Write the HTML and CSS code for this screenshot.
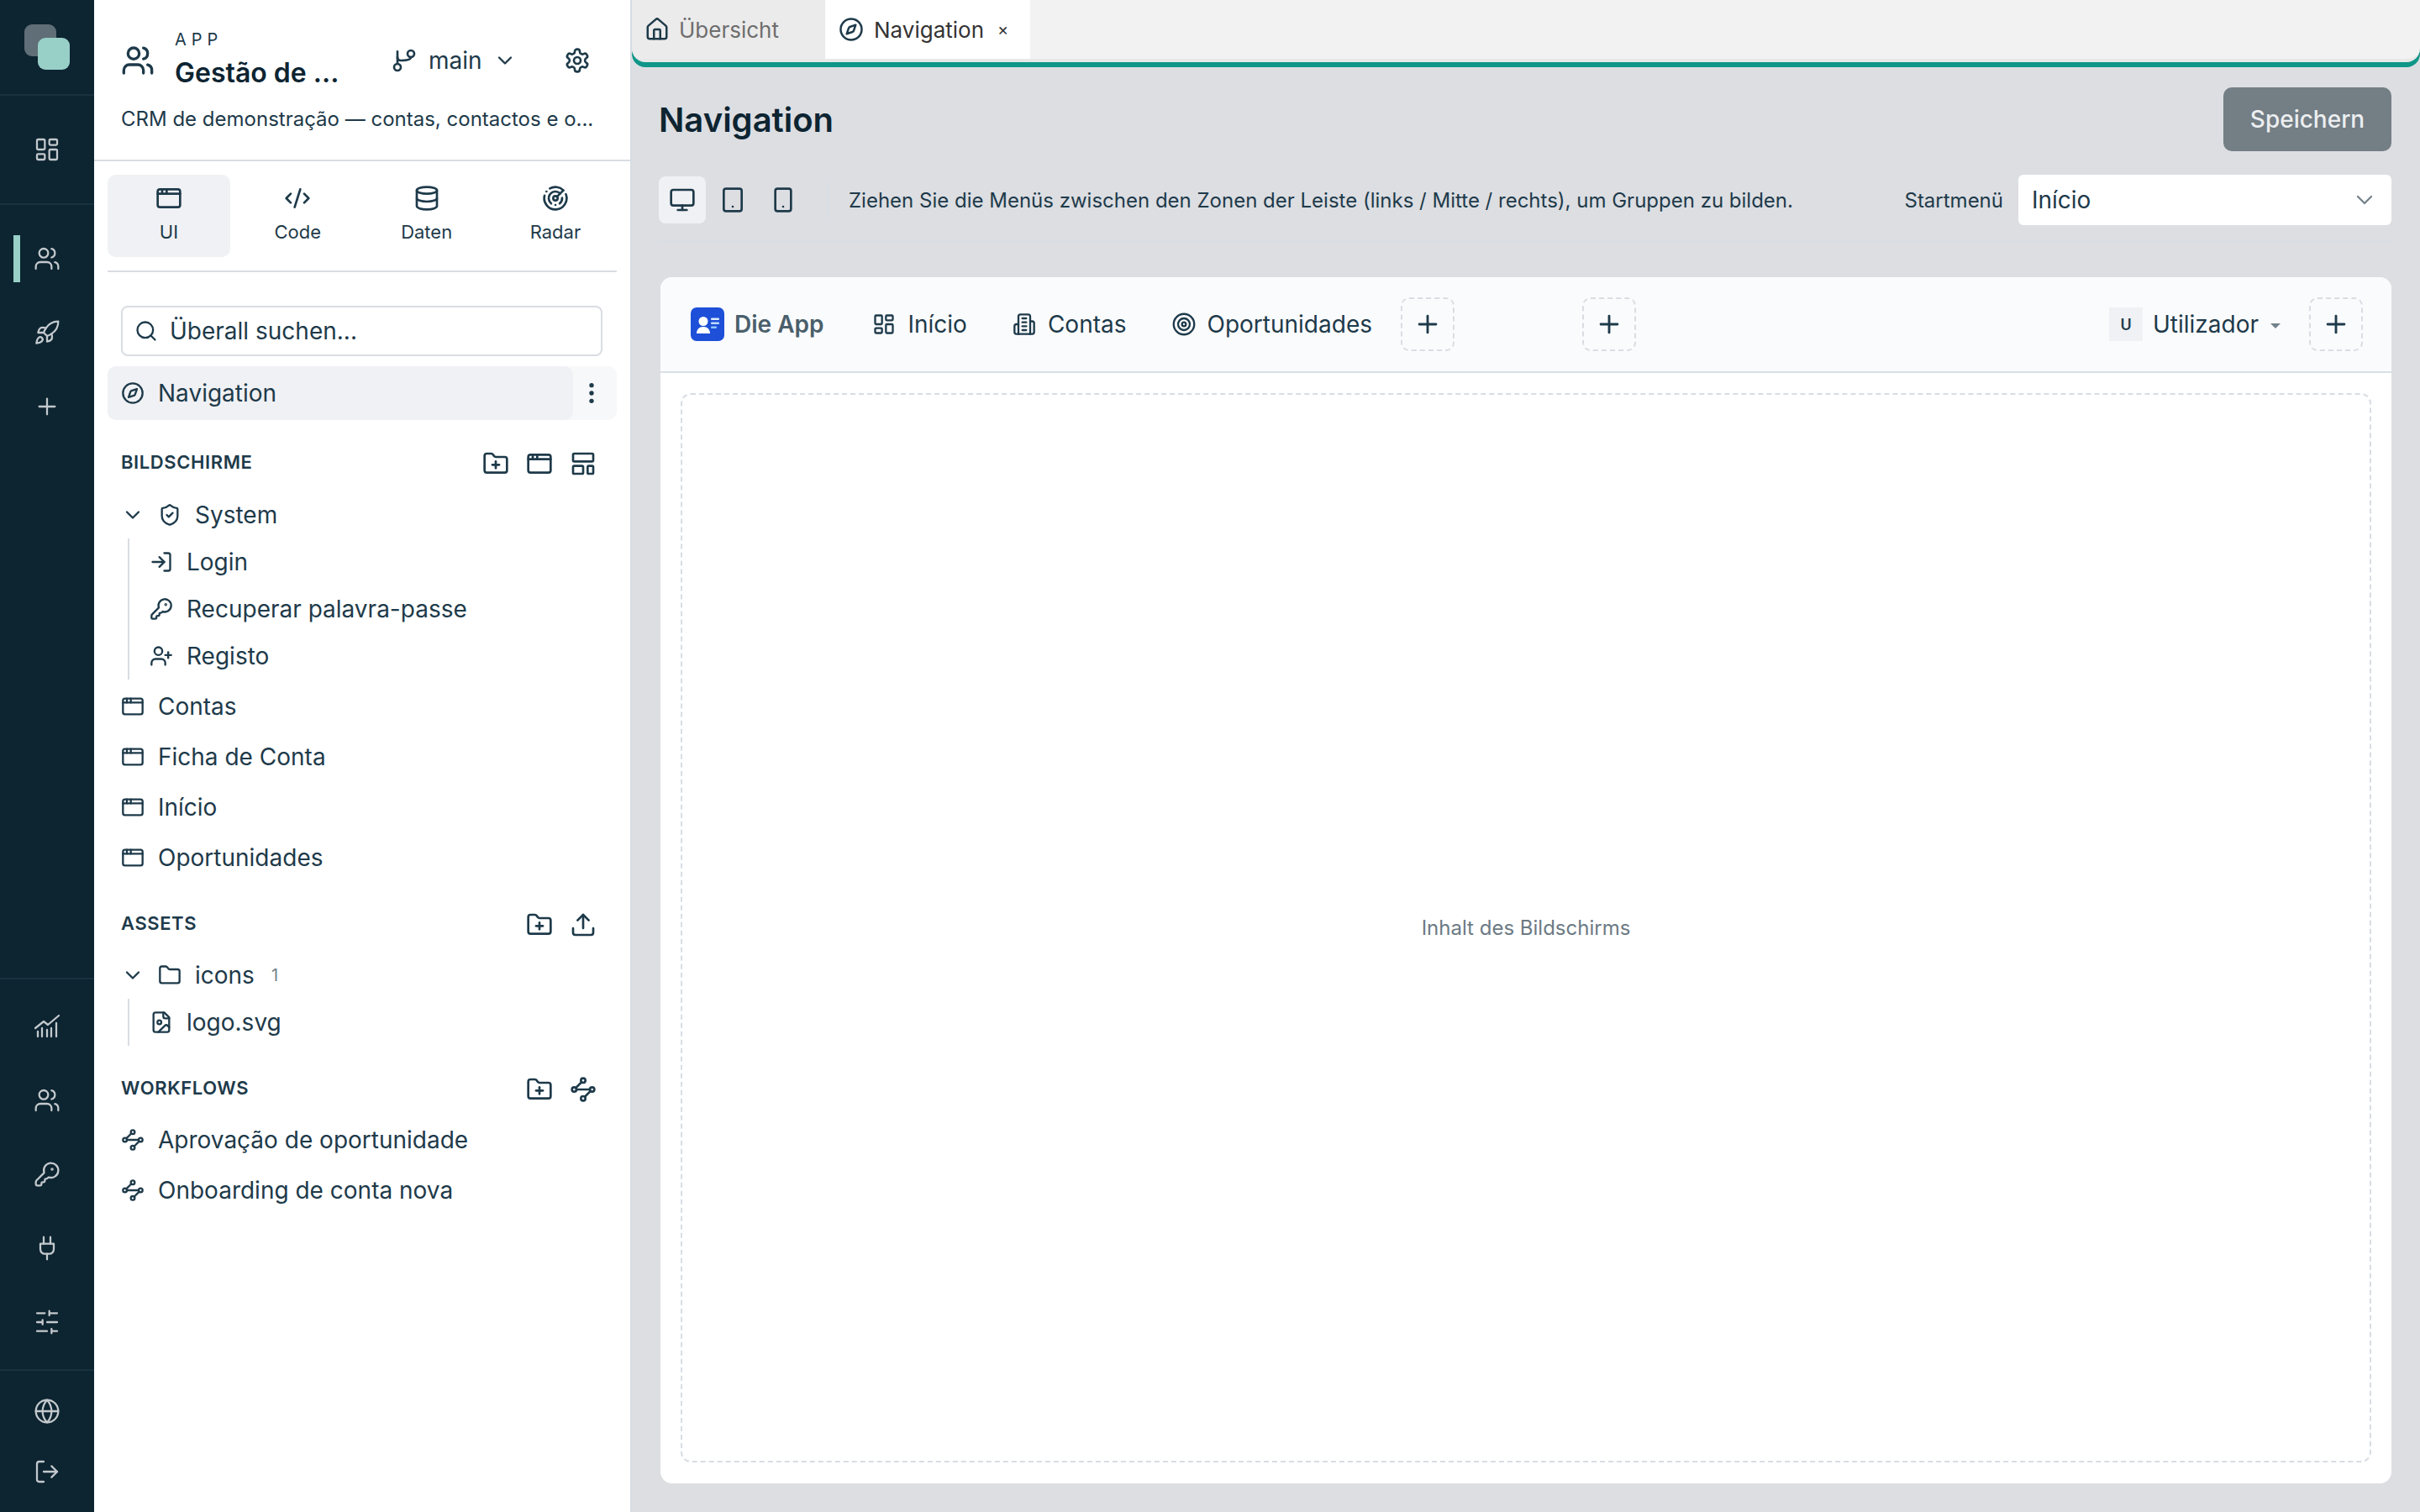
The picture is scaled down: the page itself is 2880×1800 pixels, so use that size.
FILE: index.html
```html
<!DOCTYPE html>
<html lang="de">
<head>
<meta charset="utf-8">
<title>Navigation</title>
<link rel="stylesheet" href="styles.css">
</head>
<body>
<svg class="defs" aria-hidden="true">
<symbol id="i-grid" viewBox="0 0 24 24"><rect x="3" y="3" width="7" height="9" rx="1"/><rect x="14" y="3" width="7" height="5" rx="1"/><rect x="14" y="12" width="7" height="9" rx="1"/><rect x="3" y="16" width="7" height="5" rx="1"/></symbol>
<symbol id="i-users" viewBox="0 0 24 24"><path d="M16 21v-2a4 4 0 0 0-4-4H6a4 4 0 0 0-4 4v2"/><circle cx="9" cy="7" r="4"/><path d="M22 21v-2a4 4 0 0 0-3-3.87"/><path d="M16 3.13a4 4 0 0 1 0 7.75"/></symbol>
<symbol id="i-rocket" viewBox="0 0 24 24"><path d="M4.5 16.5c-1.5 1.26-2 5-2 5s3.74-.5 5-2c.71-.84.7-2.13-.09-2.91a2.18 2.18 0 0 0-2.91-.09z"/><path d="m12 15-3-3a22 22 0 0 1 2-3.95A12.88 12.88 0 0 1 22 2c0 2.72-.78 7.5-6 11a22.35 22.35 0 0 1-4 2z"/><path d="M9 12H4s.55-3.03 2-4c1.62-1.08 5 0 5 0"/><path d="M12 15v5s3.03-.55 4-2c1.08-1.62 0-5 0-5"/></symbol>
<symbol id="i-plus" viewBox="0 0 24 24"><path d="M5 12h14"/><path d="M12 5v14"/></symbol>
<symbol id="i-chart" viewBox="0 0 24 24"><path d="M3.75 21v-4.5"/><path d="M7.5 21v-7.5"/><path d="M12 21v-6"/><path d="M15.75 21v-7.5"/><path d="M20.25 21V9"/><path d="M1.5 13.5 9 7.5l3.75 3 9.75-8.25"/></symbol>
<symbol id="i-key" viewBox="0 0 24 24"><path d="M2.586 17.414A2 2 0 0 0 2 18.828V21a1 1 0 0 0 1 1h3a1 1 0 0 0 1-1v-1a1 1 0 0 1 1-1h1a1 1 0 0 0 1-1v-1a1 1 0 0 1 1-1h.172a2 2 0 0 0 1.414-.586l.814-.814a6.5 6.5 0 1 0-4-4z"/><circle cx="16.5" cy="7.5" r=".5"/></symbol>
<symbol id="i-plug" viewBox="0 0 24 24"><path d="M12 22v-5"/><path d="M9 8V2"/><path d="M15 8V2"/><path d="M18 8v5a4 4 0 0 1-4 4h-4a4 4 0 0 1-4-4V8Z"/></symbol>
<symbol id="i-sliders" viewBox="0 0 24 24"><path d="M21 4h-7M10 4H3M21 12h-9M8 12H3M21 20h-5M12 20H3M14 2v4M8 10v4M16 18v4"/></symbol>
<symbol id="i-globe" viewBox="0 0 24 24"><circle cx="12" cy="12" r="10"/><path d="M12 2a14.5 14.5 0 0 0 0 20 14.5 14.5 0 0 0 0-20"/><path d="M2 12h20"/></symbol>
<symbol id="i-logout" viewBox="0 0 24 24"><path d="M9 21H5a2 2 0 0 1-2-2V5a2 2 0 0 1 2-2h4"/><path d="m16 17 5-5-5-5"/><path d="M21 12H9"/></symbol>
<symbol id="i-branch" viewBox="0 0 24 24"><circle cx="18" cy="6" r="3"/><circle cx="6" cy="18" r="3"/><path d="M6 15V9"/><path d="M6 4v5c0 2 1 3 3 3 5 0 9-1 9-3"/></symbol>
<symbol id="i-chev" viewBox="0 0 24 24"><path d="m6 9 6 6 6-6"/></symbol>
<symbol id="i-gear" viewBox="0 0 24 24"><path d="M12.22 2h-.44a2 2 0 0 0-2 2v.18a2 2 0 0 1-1 1.73l-.43.25a2 2 0 0 1-2 0l-.15-.08a2 2 0 0 0-2.73.73l-.22.38a2 2 0 0 0 .73 2.73l.15.1a2 2 0 0 1 1 1.72v.51a2 2 0 0 1-1 1.74l-.15.09a2 2 0 0 0-.73 2.73l.22.38a2 2 0 0 0 2.73.73l.15-.08a2 2 0 0 1 2 0l.43.25a2 2 0 0 1 1 1.73V20a2 2 0 0 0 2 2h.44a2 2 0 0 0 2-2v-.18a2 2 0 0 1 1-1.73l.43-.25a2 2 0 0 1 2 0l.15.08a2 2 0 0 0 2.73-.73l.22-.39a2 2 0 0 0-.73-2.73l-.15-.08a2 2 0 0 1-1-1.74v-.5a2 2 0 0 1 1-1.74l.15-.09a2 2 0 0 0 .73-2.73l-.22-.38a2 2 0 0 0-2.73-.73l-.15.08a2 2 0 0 1-2 0l-.43-.25a2 2 0 0 1-1-1.73V4a2 2 0 0 0-2-2z"/><circle cx="12" cy="12" r="3"/></symbol>
<symbol id="i-window" viewBox="0 0 24 24"><rect x="2" y="4" width="20" height="16" rx="2"/><path d="M10 4v4"/><path d="M2 8h20"/><path d="M6 4v4"/></symbol>
<symbol id="i-code" viewBox="0 0 24 24"><path d="m18 16 4-4-4-4"/><path d="m6 8-4 4 4 4"/><path d="m14.5 4-5 16"/></symbol>
<symbol id="i-db" viewBox="0 0 24 24"><ellipse cx="12" cy="5" rx="9" ry="3"/><path d="M3 5v14a9 3 0 0 0 18 0V5"/><path d="M3 12a9 3 0 0 0 18 0"/></symbol>
<symbol id="i-radar" viewBox="0 0 24 24"><path d="M19.07 4.93A10 10 0 0 0 6.99 3.34"/><path d="M4 6h.01"/><path d="M2.29 9.62A10 10 0 1 0 21.31 8.35"/><path d="M16.24 7.76A6 6 0 1 0 8.23 16.67"/><path d="M12 18h.01"/><path d="M17.99 11.66A6 6 0 0 1 15.77 16.67"/><circle cx="12" cy="12" r="2"/><path d="m13.41 10.59 5.66-5.66"/></symbol>
<symbol id="i-search" viewBox="0 0 24 24"><path d="m21 21-4.3-4.3"/><circle cx="11" cy="11" r="8"/></symbol>
<symbol id="i-compass" viewBox="0 0 24 24"><path d="m16.24 7.76-1.804 5.411a2 2 0 0 1-1.265 1.265L7.76 16.24l1.804-5.411a2 2 0 0 1 1.265-1.265z"/><circle cx="12" cy="12" r="10"/></symbol>
<symbol id="i-folderplus" viewBox="0 0 24 24"><path d="M12 10v6"/><path d="M9 13h6"/><path d="M20 20a2 2 0 0 0 2-2V8a2 2 0 0 0-2-2h-7.9a2 2 0 0 1-1.69-.9L9.6 3.9A2 2 0 0 0 7.93 3H4a2 2 0 0 0-2 2v13a2 2 0 0 0 2 2Z"/></symbol>
<symbol id="i-template" viewBox="0 0 24 24"><rect x="3" y="3" width="18" height="7" rx="1"/><rect x="3" y="14" width="9" height="7" rx="1"/><rect x="16" y="14" width="5" height="7" rx="1"/></symbol>
<symbol id="i-shield" viewBox="0 0 24 24"><path d="M20 13c0 5-3.5 7.5-7.66 8.95a1 1 0 0 1-.67-.01C7.5 20.5 4 18 4 13V6a1 1 0 0 1 1-1c2 0 4.5-1.2 6.24-2.72a1.17 1.17 0 0 1 1.52 0C14.51 3.81 17 5 19 5a1 1 0 0 1 1 1z"/><path d="m9 12 2 2 4-4"/></symbol>
<symbol id="i-login" viewBox="0 0 24 24"><path d="m10 17 5-5-5-5"/><path d="M15 12H3"/><path d="M15 3h4a2 2 0 0 1 2 2v14a2 2 0 0 1-2 2h-4"/></symbol>
<symbol id="i-userplus" viewBox="0 0 24 24"><path d="M16 21v-2a4 4 0 0 0-4-4H6a4 4 0 0 0-4 4v2"/><circle cx="9" cy="7" r="4"/><path d="M19 8v6"/><path d="M22 11h-6"/></symbol>
<symbol id="i-upload" viewBox="0 0 24 24"><path d="M21 15v4a2 2 0 0 1-2 2H5a2 2 0 0 1-2-2v-4"/><path d="m17 8-5-5-5 5"/><path d="M12 3v12"/></symbol>
<symbol id="i-folder" viewBox="0 0 24 24"><path d="M20 20a2 2 0 0 0 2-2V8a2 2 0 0 0-2-2h-7.9a2 2 0 0 1-1.69-.9L9.6 3.9A2 2 0 0 0 7.93 3H4a2 2 0 0 0-2 2v13a2 2 0 0 0 2 2Z"/></symbol>
<symbol id="i-fileimg" viewBox="0 0 24 24"><path d="M15 2H6a2 2 0 0 0-2 2v16a2 2 0 0 0 2 2h12a2 2 0 0 0 2-2V7Z"/><path d="M14 2v4a2 2 0 0 0 2 2h4"/><circle cx="10" cy="12" r="2"/><path d="m20 17-1.296-1.296a2.41 2.41 0 0 0-3.408 0L9 22"/></symbol>
<symbol id="i-flow" viewBox="0 0 24 24"><circle cx="12" cy="4" r="2"/><circle cx="4" cy="12" r="2"/><circle cx="20" cy="12" r="2"/><circle cx="12" cy="20" r="2"/><path d="M10.6 5.4 5.4 10.6"/><path d="M6 12h12"/><path d="M18.6 13.4 13.4 18.6"/></symbol>
<symbol id="i-home" viewBox="0 0 24 24"><path d="M15 21v-8a1 1 0 0 0-1-1h-4a1 1 0 0 0-1 1v8"/><path d="M3 10a2 2 0 0 1 .709-1.528l7-5.999a2 2 0 0 1 2.582 0l7 5.999A2 2 0 0 1 21 10v9a2 2 0 0 1-2 2H5a2 2 0 0 1-2-2z"/></symbol>
<symbol id="i-monitor" viewBox="0 0 24 24"><rect x="2" y="3" width="20" height="14" rx="2"/><path d="M8 21h8"/><path d="M12 17v4"/></symbol>
<symbol id="i-tablet" viewBox="0 0 24 24"><rect x="4" y="2" width="16" height="20" rx="2"/><path d="M12 18h.01"/></symbol>
<symbol id="i-phone" viewBox="0 0 24 24"><rect x="5" y="2" width="14" height="20" rx="2"/><path d="M12 18h.01"/></symbol>
<symbol id="i-building" viewBox="0 0 24 24"><path d="M6 22V4a2 2 0 0 1 2-2h8a2 2 0 0 1 2 2v18Z"/><path d="M6 12H4a2 2 0 0 0-2 2v6a2 2 0 0 0 2 2h2"/><path d="M18 9h2a2 2 0 0 1 2 2v9a2 2 0 0 1-2 2h-2"/><path d="M10 6h4"/><path d="M10 10h4"/><path d="M10 14h4"/><path d="M10 18h4"/></symbol>
<symbol id="i-target" viewBox="0 0 24 24"><circle cx="12" cy="12" r="10.5"/><circle cx="12" cy="12" r="6"/><circle cx="12" cy="12" r="2"/></symbol>
</svg>

<div class="app">
  <nav class="rail">
    <div class="rail-logo"><span class="logo-back"></span><span class="logo-front"></span></div>
    <div class="rail-group rail-single"><svg class="ic ic-rail"><use href="#i-grid"/></svg></div>
    <div class="rail-group rail-main">
      <a class="rail-item active"><svg class="ic ic-rail"><use href="#i-users"/></svg></a>
      <a class="rail-item"><svg class="ic ic-rail"><use href="#i-rocket"/></svg></a>
      <a class="rail-item"><svg class="ic ic-rail"><use href="#i-plus"/></svg></a>
    </div>
    <div class="rail-group rail-tools">
      <a class="rail-item"><svg class="ic ic-rail"><use href="#i-chart"/></svg></a>
      <a class="rail-item"><svg class="ic ic-rail"><use href="#i-users"/></svg></a>
      <a class="rail-item"><svg class="ic ic-rail"><use href="#i-key"/></svg></a>
      <a class="rail-item"><svg class="ic ic-rail"><use href="#i-plug"/></svg></a>
      <a class="rail-item"><svg class="ic ic-rail"><use href="#i-sliders"/></svg></a>
    </div>
    <div class="rail-group rail-bottom">
      <a class="rail-item rail-item-b"><svg class="ic ic-rail"><use href="#i-globe"/></svg></a>
      <a class="rail-item rail-item-b"><svg class="ic ic-rail"><use href="#i-logout"/></svg></a>
    </div>
  </nav>

  <aside class="panel">
    <header class="panel-head">
      <div class="head-row">
        <svg class="ic ic-app"><use href="#i-users"/></svg>
        <div class="app-names">
          <div class="app-kicker">APP</div>
          <div class="app-title">Gestão de ...</div>
        </div>
        <div class="branch"><svg class="ic ic-md"><use href="#i-branch"/></svg><span>main</span><svg class="ic ic-chev"><use href="#i-chev"/></svg></div>
        <svg class="ic ic-gear"><use href="#i-gear"/></svg>
      </div>
      <p class="app-desc">CRM de demonstração — contas, contactos e o...</p>
    </header>

    <div class="mode-tabs">
      <div class="mode active"><svg class="ic ic-mode"><use href="#i-window"/></svg><span>UI</span></div>
      <div class="mode"><svg class="ic ic-mode"><use href="#i-code"/></svg><span>Code</span></div>
      <div class="mode"><svg class="ic ic-mode"><use href="#i-db"/></svg><span>Daten</span></div>
      <div class="mode"><svg class="ic ic-mode"><use href="#i-radar"/></svg><span>Radar</span></div>
    </div>

    <div class="search"><svg class="ic ic-search"><use href="#i-search"/></svg><span>Überall suchen...</span></div>

    <div class="nav-sel">
      <div class="nav-sel-main"><svg class="ic ic-row"><use href="#i-compass"/></svg><span>Navigation</span></div>
      <div class="nav-sel-more"><svg class="ic ic-more" viewBox="0 0 24 24"><circle cx="12" cy="5" r="2" class="dot"/><circle cx="12" cy="12" r="2" class="dot"/><circle cx="12" cy="19" r="2" class="dot"/></svg></div>
    </div>

    <section class="sec sec-screens">
      <div class="sec-head"><h3>BILDSCHIRME</h3><div class="sec-acts"><svg class="ic ic-act"><use href="#i-folderplus"/></svg><svg class="ic ic-act"><use href="#i-window"/></svg><svg class="ic ic-act"><use href="#i-template"/></svg></div></div>
      <div class="row row-folder"><svg class="ic ic-chev2"><use href="#i-chev"/></svg><svg class="ic ic-row"><use href="#i-shield"/></svg><span>System</span></div>
      <div class="subtree">
        <div class="row row-sub"><svg class="ic ic-row"><use href="#i-login"/></svg><span>Login</span></div>
        <div class="row row-sub"><svg class="ic ic-row"><use href="#i-key"/></svg><span>Recuperar palavra-passe</span></div>
        <div class="row row-sub"><svg class="ic ic-row"><use href="#i-userplus"/></svg><span>Registo</span></div>
      </div>
      <div class="row row-top"><svg class="ic ic-row"><use href="#i-window"/></svg><span>Contas</span></div>
      <div class="row row-top"><svg class="ic ic-row"><use href="#i-window"/></svg><span>Ficha de Conta</span></div>
      <div class="row row-top"><svg class="ic ic-row"><use href="#i-window"/></svg><span>Início</span></div>
      <div class="row row-top"><svg class="ic ic-row"><use href="#i-window"/></svg><span>Oportunidades</span></div>
    </section>

    <section class="sec sec-assets">
      <div class="sec-head"><h3>ASSETS</h3><div class="sec-acts"><svg class="ic ic-act"><use href="#i-folderplus"/></svg><svg class="ic ic-act"><use href="#i-upload"/></svg></div></div>
      <div class="row row-folder"><svg class="ic ic-chev2"><use href="#i-chev"/></svg><svg class="ic ic-row"><use href="#i-folder"/></svg><span>icons</span><small class="count">1</small></div>
      <div class="subtree">
        <div class="row row-sub"><svg class="ic ic-row"><use href="#i-fileimg"/></svg><span>logo.svg</span></div>
      </div>
    </section>

    <section class="sec sec-flows">
      <div class="sec-head"><h3>WORKFLOWS</h3><div class="sec-acts"><svg class="ic ic-act"><use href="#i-folderplus"/></svg><svg class="ic ic-act"><use href="#i-flow"/></svg></div></div>
      <div class="row row-top"><svg class="ic ic-row"><use href="#i-flow"/></svg><span>Aprovação de oportunidade</span></div>
      <div class="row row-top"><svg class="ic ic-row"><use href="#i-flow"/></svg><span>Onboarding de conta nova</span></div>
    </section>
  </aside>

  <main class="main">
    <div class="tabs-wrap">
      <div class="tabs">
        <div class="tab"><svg class="ic ic-tab"><use href="#i-home"/></svg><span>Übersicht</span></div>
        <div class="tab tab-active"><svg class="ic ic-tab"><use href="#i-compass"/></svg><span>Navigation</span><span class="tab-x">×</span></div>
      </div>
    </div>

    <div class="page">
      <div class="page-head">
        <h1>Navigation</h1>
        <button class="save">Speichern</button>
      </div>
      <div class="toolbar">
        <div class="devices">
          <span class="device active"><svg class="ic ic-device"><use href="#i-monitor"/></svg></span>
          <span class="device"><svg class="ic ic-device"><use href="#i-tablet"/></svg></span>
          <span class="device"><svg class="ic ic-device"><use href="#i-phone"/></svg></span>
        </div>
        <span class="tool-sep"></span>
        <p class="hint">Ziehen Sie die Menüs zwischen den Zonen der Leiste (links / Mitte / rechts), um Gruppen zu bilden.</p>
        <label class="start-label">Startmenü</label>
        <div class="select"><span>Início</span><svg class="ic ic-selchev"><use href="#i-chev"/></svg></div>
      </div>

      <div class="card">
        <div class="bar">
          <div class="zone zone-left">
            <div class="brand"><svg class="brand-logo" viewBox="0 0 40 40"><rect width="40" height="40" rx="7" class="brand-bg"/><circle cx="15" cy="16.500" r="5.500" class="brand-w"/><path d="M7 31c0-4.500 3-8 8-8s8 3.500 8 8z" class="brand-w"/><rect x="24" y="12.500" width="10" height="2.600" rx="1" class="brand-l1"/><rect x="24" y="17.500" width="10" height="2.600" rx="1" class="brand-l2"/><rect x="24" y="22.500" width="7" height="2.600" rx="1" class="brand-l3"/></svg><span>Die App</span></div>
            <div class="menu"><svg class="ic ic-menu"><use href="#i-grid"/></svg><span>Início</span></div>
            <div class="menu"><svg class="ic ic-menu"><use href="#i-building"/></svg><span>Contas</span></div>
            <div class="menu menu-last"><svg class="ic ic-menu"><use href="#i-target"/></svg><span>Oportunidades</span></div>
            <div class="add"><svg class="ic ic-add"><use href="#i-plus"/></svg></div>
          </div>
          <div class="zone zone-mid"><div class="add"><svg class="ic ic-add"><use href="#i-plus"/></svg></div></div>
          <div class="zone zone-right">
            <div class="user"><span class="avatar">U</span><span>Utilizador</span><span class="caret"></span></div>
            <div class="add"><svg class="ic ic-add"><use href="#i-plus"/></svg></div>
          </div>
        </div>
        <div class="canvas-wrap"><div class="canvas">Inhalt des Bildschirms</div></div>
      </div>
    </div>
  </main>
</div>
</body>
</html>
```
FILE: styles.css
```css
* { box-sizing: border-box; }
html, body { margin: 0; height: 100%; }
body { font-family: Inter, "Noto Sans", sans-serif; color: #1e3a4a; background: #dcdee2; overflow: hidden; }
.defs { display: none; }
h1, h3, p { margin: 0; }
.ic { fill: none; stroke: currentColor; stroke-width: 2; stroke-linecap: round; stroke-linejoin: round; flex: none; display: block; }

.app { display: flex; width: 2880px; height: 1800px; }

/* rail */
.rail { width: 112px; flex: none; background: #0d2431; display: flex; flex-direction: column; color: #c3c9cd; }
.rail-logo { height: 114px; position: relative; border-bottom: 2px solid #17323f; flex: none; }
.logo-back, .logo-front { position: absolute; width: 38px; height: 38px; border-radius: 9px; }
.logo-back { left: 29px; top: 29px; background: #5f6e77; }
.logo-front { left: 45px; top: 45px; background: #98d0c8; }
.rail-group { display: flex; flex-direction: column; align-items: center; flex: none; }
.rail-single { height: 130px; justify-content: center; border-bottom: 2px solid #17323f; }
.rail-main { flex: 1; padding-top: 20px; border-bottom: 2px solid #17323f; }
.rail-tools { padding: 12px 0; height: 466px; border-bottom: 2px solid #17323f; }
.rail-bottom { height: 168px; padding-top: 12px; }
.rail-item { width: 112px; height: 88px; flex: none; display: flex; align-items: center; justify-content: center; position: relative; }
.rail-item-b { height: 72px; }
.rail-item.active::before { content: ""; position: absolute; left: 16px; top: 16px; width: 8px; height: 56px; background: #98d0c8; }
.ic-rail { width: 32px; height: 32px; stroke-width: 1.7; }

/* panel */
.panel { width: 638px; flex: none; background: #fff; display: flex; flex-direction: column; }
.panel-head { height: 192px; padding: 32px 32px 0; border-bottom: 2px solid #d9dde2; flex: none; }
.head-row { display: flex; align-items: center; height: 76px; }
.ic-app { width: 40px; height: 40px; margin-top: 4px; }
.app-names { margin: 2px 0 0 24px; width: 226px; flex: none; }
.app-kicker { font-size: 20px; line-height: 24px; letter-spacing: 6px; }
.app-title { font-size: 32px; line-height: 40px; font-weight: 600; color: #0d2431; margin-top: 8px; white-space: nowrap; }
.branch { display: flex; align-items: center; font-size: 28px; color: #1e3a4a; margin-left: 31px; margin-top: 4px; }
.ic-md { width: 32px; height: 32px; margin-right: 13px; }
.ic-chev { width: 28px; height: 28px; margin-left: 13px; }
.ic-gear { width: 32px; height: 32px; margin-left: 56px; margin-top: 4px; }
.app-desc { font-size: 24px; line-height: 34px; margin-top: 17px; white-space: nowrap; color: #1e3a4a; }

.mode-tabs { display: flex; justify-content: space-between; margin: 16px 16px 0; padding-bottom: 16px; border-bottom: 2px solid #d9dde2; flex: none; }
.mode { width: 146px; height: 98px; border-radius: 10px; display: flex; flex-direction: column; align-items: center; padding-top: 12px; gap: 12px; font-size: 22px; line-height: 24px; }
.mode.active { background: #f0f1f4; }
.ic-mode { width: 32px; height: 32px; }

.search { margin: 40px 33px 0 32px; height: 60px; border: 2px solid #d9dde2; border-radius: 8px; display: flex; align-items: center; padding-left: 14px; font-size: 28px; flex: none; }
.ic-search { width: 28px; height: 28px; margin-right: 14px; }

.nav-sel { margin: 12px 16px 0; height: 64px; background: #f7f8fa; border-radius: 10px; display: flex; flex: none; }
.nav-sel-main { width: 554px; background: #f0f1f4; border-radius: 10px; display: flex; align-items: center; padding-left: 16px; font-size: 28px; gap: 16px; }
.nav-sel-more { flex: 1; display: flex; align-items: center; justify-content: center; padding-right: 8px; }
.ic-more { width: 32px; height: 32px; }
.ic-more .dot { fill: #1e3a4a; stroke: none; }
.ic-row { width: 28px; height: 28px; }

.sec { padding: 0 32px; flex: none; }
.sec-screens { margin-top: 28px; }
.sec-assets { margin-top: 26px; }
.sec-flows { margin-top: 28px; }
.sec-head { display: flex; align-items: center; justify-content: space-between; height: 44px; margin-bottom: 12px; }
.sec-screens .sec-head { margin-bottom: 13px; }
.sec-flows .sec-head { margin-bottom: 10px; }
.sec-head h3 { font-size: 22px; font-weight: 600; letter-spacing: .6px; color: #1e3a4a; }
.sec-acts { display: flex; gap: 20px; padding-right: 8px; margin-top: 4px; }
.ic-act { width: 32px; height: 32px; }

.row { display: flex; align-items: center; font-size: 28px; white-space: nowrap; }
.row-top { height: 60px; gap: 16px; }
.row-folder { height: 56px; }
.ic-chev2 { width: 28px; height: 28px; margin-right: 16px; }
.row-folder span { margin-left: 16px; }
.subtree { border-left: 2px solid #d9dde2; margin-left: 8px; padding-left: 24px; }
.sec-screens .subtree { margin-bottom: 2px; }
.row-sub { height: 56px; gap: 16px; }
.count { font-size: 20px; margin-left: 20px; color: #73818a; }

/* main */
.main { flex: 1; display: flex; flex-direction: column; min-width: 0; border-left: 2px solid #d6dde3; }
.tabs-wrap { height: 80px; flex: none; background: #0e9688; border-radius: 0 0 16px 16px; overflow: hidden; }
.tabs { height: 74px; background: #f2f2f2; border-bottom: 4px solid #e8e8e8; border-radius: 0 0 16px 16px; display: flex; overflow: hidden; }
.tab { height: 70px; display: flex; align-items: center; font-size: 26px; }
.tab:first-child { width: 230px; background: #ebebeb; color: #6e6e6e; padding-left: 15px; gap: 11px; }
.tab-active { width: 244px; background: #fff; color: #333; padding-left: 16px; gap: 12px; }
.ic-tab { width: 30px; height: 30px; color: #1e3a4a; }
.tab-x { font-size: 20px; margin-left: 4px; }

.page { flex: 1; padding: 24px 34px 34px 32px; display: flex; flex-direction: column; min-height: 0; }
.page-head { display: flex; align-items: center; justify-content: space-between; height: 76px; }
h1 { font-size: 40px; font-weight: 600; color: #0d2431; }
.save { width: 200px; height: 76px; border: none; border-radius: 10px; background: #737e85; color: #eceef0; font: 500 28px Inter, sans-serif; }
.toolbar { display: flex; align-items: center; height: 78px; margin-top: 30px; padding-bottom: 20px; border-bottom: 2px solid #d8dee3; }
.devices { display: flex; gap: 4px; }
.device { width: 56px; height: 56px; border-radius: 8px; display: flex; align-items: center; justify-content: center; }
.device.active { background: #f0f1f4; }
.ic-device { width: 32px; height: 32px; }
.tool-sep { width: 2px; height: 48px; background: #d8dee3; margin-left: 24px; margin-right: 24px; flex: none; }
.hint { flex: 1; font-size: 24px; white-space: nowrap; }
.start-label { font-size: 24px; margin-right: 18px; }
.select { width: 444px; height: 60px; flex: none; background: #fff; border-radius: 6px; display: flex; align-items: center; justify-content: space-between; padding: 0 16px; font-size: 28px; }
.ic-selchev { width: 32px; height: 32px; color: #73818a; stroke-width: 1.7; }

.card { flex: 1; margin: 42px 0 0 2px; background: #fff; border-radius: 14px; display: flex; flex-direction: column; overflow: hidden; min-height: 0; }
.bar { height: 114px; flex: none; background: #fafbfd; border-bottom: 2px solid #d9dfe5; display: flex; align-items: center; padding: 0 34px 0 36px; font-size: 28px; }
.zone { display: flex; align-items: center; }
.zone-right { margin-left: auto; }
.zone-mid { margin-left: 152px; }
.brand { display: flex; align-items: center; gap: 12px; font-weight: 600; color: #4a5f6b; margin-right: 58px; }
.brand-logo { width: 40px; height: 40px; flex: none; }
.brand-bg { fill: #1d4fd8; }
.brand-w { fill: #fff; }
.brand-l1 { fill: #dbeafe; }
.brand-l2 { fill: #bfdbfe; }
.brand-l3 { fill: #93c5fd; }
.menu { display: flex; align-items: center; gap: 14px; margin-right: 54px; }
.menu-last { margin-right: 34px; }
.ic-menu { width: 28px; height: 28px; }
.add { width: 64px; height: 64px; border: 2px dashed #d8dde3; border-radius: 10px; display: flex; align-items: center; justify-content: center; }
.ic-add { width: 34px; height: 34px; }
.user { display: flex; align-items: center; margin-right: 34px; }
.avatar { width: 40px; height: 40px; background: #f0f1f4; font-size: 18px; font-weight: 600; display: flex; align-items: center; justify-content: center; margin-right: 12px; }
.caret { width: 0; height: 0; border: 6px solid transparent; border-top: 6px solid #73818a; border-bottom: 0; margin-left: 14px; margin-top: 4px; }
.canvas-wrap { flex: 1; padding: 24px 24px 25px; min-height: 0; }
.canvas { height: 100%; border: 2px dashed #d8dde3; border-radius: 12px; display: flex; align-items: center; justify-content: center; font-size: 24px; color: #6c7a84; }
```
